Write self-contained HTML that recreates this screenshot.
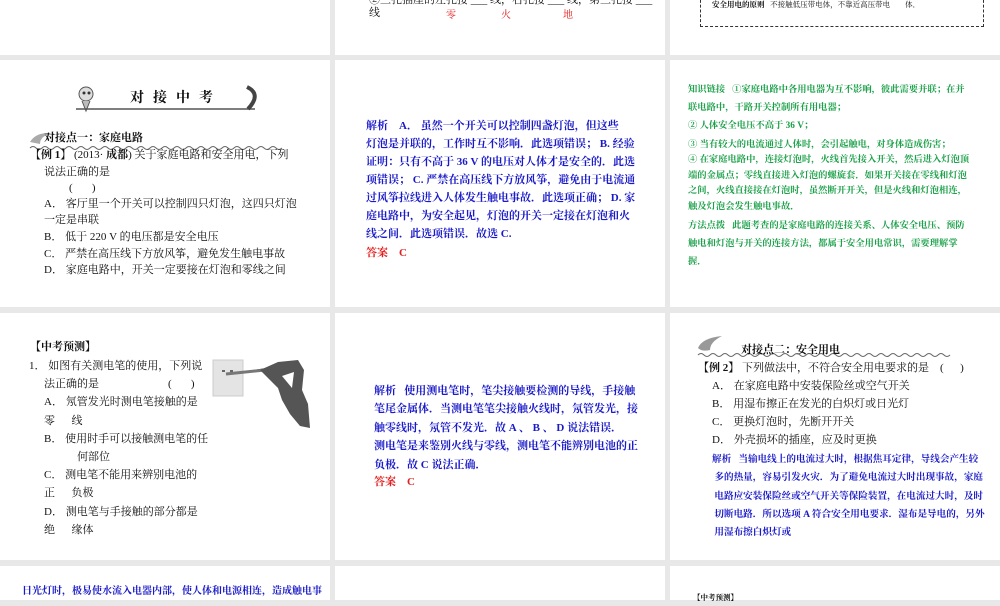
<!DOCTYPE html>
<html><head><meta charset="utf-8"><style>
*{margin:0;padding:0}
body{width:1000px;height:600px;background:#e8e8e8;position:relative;overflow:hidden;font-family:"Liberation Serif","Noto Serif CJK SC",serif;}
.s{position:absolute;background:#fff;overflow:hidden}
.t{position:absolute;white-space:nowrap;font-size:11px;line-height:16px;color:#111}
.b{color:#1a1ac8;font-weight:bold}
.r{color:#e02020}
.g{color:#1aa048;font-size:9.3px;font-weight:bold}
.k{font-weight:bold}
</style></head><body>
<div class="s" style="left:0;top:0;width:330px;height:55px"></div>
<div class="s" style="left:335px;top:0;width:330px;height:55px"></div>
<div class="s" style="left:670px;top:0;width:330px;height:55px"></div>
<div class="s" style="left:0;top:60px;width:330px;height:247px"></div>
<div class="s" style="left:335px;top:60px;width:330px;height:247px"></div>
<div class="s" style="left:670px;top:60px;width:330px;height:247px"></div>
<div class="s" style="left:0;top:313px;width:330px;height:247px"></div>
<div class="s" style="left:335px;top:313px;width:330px;height:247px"></div>
<div class="s" style="left:670px;top:313px;width:330px;height:247px"></div>
<div class="s" style="left:0;top:566px;width:330px;height:34px"></div>
<div class="s" style="left:335px;top:566px;width:330px;height:34px"></div>
<div class="s" style="left:670px;top:566px;width:330px;height:34px"></div>

<!-- row1 -->
<div class="t" style="left:369px;top:-8px">②三孔插座的左孔接 ___ 线，右孔接 ___ 线，第三孔接 ___</div>
<div class="t" style="left:369px;top:5px">线</div>
<div class="t r" style="left:446px;top:8px;font-size:10px">零</div>
<div class="t r" style="left:501px;top:8px;font-size:10px">火</div>
<div class="t r" style="left:563px;top:8px;font-size:10px">地</div>
<div style="position:absolute;left:700px;top:-5px;width:282px;height:31px;border:1px dashed #333;border-top:none"></div>
<div class="t" style="left:712px;top:-3px;font-size:7.5px"><b>安全用电的原则</b>&nbsp;&nbsp; 不接触低压带电体，不靠近高压带电 &nbsp;&nbsp;&nbsp;&nbsp;&nbsp;&nbsp; 体．</div>

<!-- row2 col1 -->
<svg style="position:absolute;left:70px;top:84px" width="200" height="30">
<circle cx="16" cy="10" r="7" fill="#ddd" stroke="#555"/><circle cx="14" cy="9" r="1.5" fill="#333"/><circle cx="19" cy="9" r="1.5" fill="#333"/>
<path d="M12 17 L16 27 L20 17" fill="#bbb" stroke="#555"/>
<path d="M6 25 L185 25" stroke="#555" stroke-width="1.5"/>
<path d="M177 3 Q192 10 178 25" fill="none" stroke="#444" stroke-width="4"/>
</svg>
<div class="t k" style="left:130px;top:91px;font-size:14px;letter-spacing:9px">对接中考</div>
<svg style="position:absolute;left:28px;top:130px" width="260" height="22"><path d="M2 12 Q8 2 24 3 Q12 6 12 14 Z" fill="#aaa"/><path d="M2 18 q3 -3 6 0 t6 0 t6 0 t6 0 t6 0 t6 0 t6 0 t6 0 t6 0 t6 0 t6 0 t6 0 t6 0 t6 0 t6 0 t6 0 t6 0 t6 0 t6 0 t6 0 t6 0 t6 0 t6 0 t6 0 t6 0 t6 0 t6 0 t6 0 t6 0 t6 0 t6 0 t6 0 t6 0 t6 0 t6 0 t6 0 t6 0 t6 0 t6 0 t6 0 t6 0 t6 0" fill="none" stroke="#666"/></svg>
<div class="t k" style="left:44px;top:130px">对接点一：家庭电路</div>
<div class="t" style="left:30px;top:147px"><b>【例 1】</b>&nbsp;(2013· <b>成都</b>) 关于家庭电路和安全用电，下列</div>
<div class="t" style="left:44px;top:164px">说法正确的是</div>
<div class="t" style="left:69px;top:180px">(&nbsp;&nbsp;&nbsp;&nbsp;&nbsp;&nbsp;&nbsp;)</div>
<div class="t" style="left:44px;top:196px">A． 客厅里一个开关可以控制四只灯泡，这四只灯泡</div>
<div class="t" style="left:44px;top:212px">一定是串联</div>
<div class="t" style="left:44px;top:229px">B． 低于 220 V 的电压都是安全电压</div>
<div class="t" style="left:44px;top:246px">C． 严禁在高压线下方放风筝，避免发生触电事故</div>
<div class="t" style="left:44px;top:262px">D． 家庭电路中，开关一定要接在灯泡和零线之间</div>

<!-- row2 col2 -->
<div class="t b" style="left:366px;top:117px;line-height:18px;font-size:11px">解析&nbsp;&nbsp;&nbsp;&nbsp;A． 虽然一个开关可以控制四盏灯泡，但这些<br>灯泡是并联的，工作时互不影响．此选项错误； B. 经验<br>证明：只有不高于 36 V 的电压对人体才是安全的．此选<br>项错误； C. 严禁在高压线下方放风筝，避免由于电流通<br>过风筝拉线进入人体发生触电事故．此选项正确； D. 家<br>庭电路中，为安全起见，灯泡的开关一定接在灯泡和火<br>线之间．此选项错误．故选 C.</div>
<div class="t r k" style="left:366px;top:245px;font-size:11px">答案&nbsp;&nbsp;&nbsp;&nbsp;C</div>

<!-- row2 col3 -->
<div class="t g" style="left:688px;top:82px">知识链接&nbsp;&nbsp;&nbsp;①家庭电路中各用电器为互不影响，彼此需要并联；在并</div>
<div class="t g" style="left:688px;top:100px">联电路中，干路开关控制所有用电器；</div>
<div class="t g" style="left:688px;top:118px">② 人体安全电压不高于 36 V；</div>
<div class="t g" style="left:688px;top:137px">③ 当有较大的电流通过人体时，会引起触电，对身体造成伤害；</div>
<div class="t g" style="left:688px;top:152px">④ 在家庭电路中，连接灯泡时，火线首先接入开关，然后进入灯泡顶</div>
<div class="t g" style="left:688px;top:168px">端的金属点；零线直接进入灯泡的螺旋套．如果开关接在零线和灯泡</div>
<div class="t g" style="left:688px;top:183px">之间，火线直接接在灯泡时，虽然断开开关，但是火线和灯泡相连，</div>
<div class="t g" style="left:688px;top:199px">触及灯泡会发生触电事故．</div>
<div class="t g" style="left:688px;top:218px">方法点拨&nbsp;&nbsp;&nbsp;此题考查的是家庭电路的连接关系、人体安全电压、预防</div>
<div class="t g" style="left:688px;top:236px">触电和灯泡与开关的连接方法，都属于安全用电常识，需要理解掌</div>
<div class="t g" style="left:688px;top:254px">握．</div>

<!-- row3 col1 -->
<div class="t k" style="left:30px;top:339px">【中考预测】</div>
<div class="t" style="left:29px;top:358px">1． 如图有关测电笔的使用，下列说</div>
<div class="t" style="left:44px;top:376px">法正确的是</div>
<div class="t" style="left:168px;top:376px">(&nbsp;&nbsp;&nbsp;&nbsp;&nbsp;&nbsp;&nbsp;)</div>
<div class="t" style="left:44px;top:394px">A． 氖管发光时测电笔接触的是</div>
<div class="t" style="left:44px;top:413px">零&nbsp;&nbsp;&nbsp;&nbsp;&nbsp;&nbsp;线</div>
<div class="t" style="left:44px;top:431px">B． 使用时手可以接触测电笔的任</div>
<div class="t" style="left:77px;top:449px">何部位</div>
<div class="t" style="left:44px;top:467px">C． 测电笔不能用来辨别电池的</div>
<div class="t" style="left:44px;top:485px">正&nbsp;&nbsp;&nbsp;&nbsp;&nbsp;&nbsp;负极</div>
<div class="t" style="left:44px;top:504px">D． 测电笔与手接触的部分都是</div>
<div class="t" style="left:44px;top:522px">绝&nbsp;&nbsp;&nbsp;&nbsp;&nbsp;&nbsp;缘体</div>
<svg style="position:absolute;left:210px;top:356px" width="105" height="75">
<rect x="3" y="4" width="30" height="36" fill="#e4e4e4" stroke="#ccc"/>
<rect x="12" y="14" width="3" height="2" fill="#666"/><rect x="20" y="14" width="3" height="2" fill="#666"/>
<path d="M16 18 L55 14 L70 10" stroke="#777" stroke-width="3"/>
<path d="M50 14 L68 6 L88 4 L94 14 L92 34 L98 48 L100 72 L90 70 L80 58 L72 44 L68 32 L60 24 Z" fill="#555"/>
<path d="M72 20 L84 16 L82 32 Z" fill="#fff"/>
</svg>

<!-- row3 col2 -->
<div class="t b" style="left:374px;top:382px;line-height:18.4px;font-size:11px">解析&nbsp;&nbsp;&nbsp;使用测电笔时，笔尖接触要检测的导线，手接触<br>笔尾金属体．当测电笔笔尖接触火线时，氖管发光，接<br>触零线时，氖管不发光．故 A 、 B 、 D 说法错误．<br>测电笔是来鉴别火线与零线，测电笔不能辨别电池的正<br>负极．故 C 说法正确．</div>
<div class="t r k" style="left:374px;top:474px;font-size:11px">答案&nbsp;&nbsp;&nbsp;&nbsp;C</div>

<!-- row3 col3 -->
<svg style="position:absolute;left:696px;top:334px" width="262" height="26"><path d="M2 14 Q6 4 26 2 Q14 8 14 16 Q6 18 2 14Z" fill="#999"/><path d="M2 21 q3 -3 6 0 t6 0 t6 0 t6 0 t6 0 t6 0 t6 0 t6 0 t6 0 t6 0 t6 0 t6 0 t6 0 t6 0 t6 0 t6 0 t6 0 t6 0 t6 0 t6 0 t6 0 t6 0 t6 0 t6 0 t6 0 t6 0 t6 0 t6 0 t6 0 t6 0 t6 0 t6 0 t6 0 t6 0 t6 0 t6 0 t6 0 t6 0 t6 0 t6 0 t6 0 t6 0" fill="none" stroke="#666"/></svg>
<div class="t k" style="left:741px;top:342px">对接点二：安全用电</div>
<div class="t" style="left:698px;top:360px"><b>【例 2】</b>&nbsp;下列做法中，不符合安全用电要求的是</div>
<div class="t" style="left:940px;top:360px">(&nbsp;&nbsp;&nbsp;&nbsp;&nbsp;&nbsp;)</div>
<div class="t" style="left:712px;top:378px">A． 在家庭电路中安装保险丝或空气开关</div>
<div class="t" style="left:712px;top:396px">B． 用湿布擦正在发光的白炽灯或日光灯</div>
<div class="t" style="left:712px;top:414px">C． 更换灯泡时，先断开开关</div>
<div class="t" style="left:712px;top:432px">D． 外壳损坏的插座，应及时更换</div>
<div class="t b" style="left:712px;top:451px;font-size:9.6px;line-height:18.3px">解析&nbsp;&nbsp;&nbsp;当输电线上的电流过大时，根据焦耳定律，导线会产生较<br>&nbsp;多的热量，容易引发火灾．为了避免电流过大时出现事故，家庭<br>&nbsp;电路应安装保险丝或空气开关等保险装置，在电流过大时，及时<br>&nbsp;切断电路．所以选项 A 符合安全用电要求．湿布是导电的，另外<br>&nbsp;用湿布擦白炽灯或</div>

<!-- row4 -->
<div class="t b" style="left:22px;top:584px;font-size:10px">日光灯时，极易使水流入电器内部，使人体和电源相连，造成触电事</div>
<div class="t k" style="left:693px;top:590px;font-size:7.5px">【中考预测】</div>
</body></html>
